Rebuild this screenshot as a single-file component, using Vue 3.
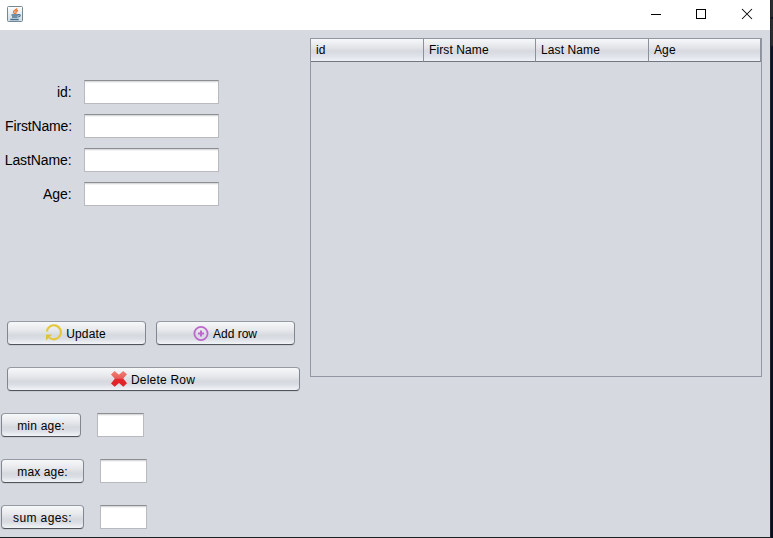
<script setup>
const fields = [
  { label: 'id:', tone: 'regular' },
  { label: 'FirstName:', tone: 'long' },
  { label: 'LastName:', tone: 'regular' },
  { label: 'Age:', tone: 'regular' },
]
const columns = ['id', 'First Name', 'Last Name', 'Age']
const stats = [
  { label: 'min age:', size: 'small' },
  { label: 'max age:', size: 'medium' },
  { label: 'sum ages:', size: 'medium wide' },
]
</script>

<template>
  <div class="desktop">
    <div class="window">
      <header class="titlebar">
        <svg class="app-icon" width="16" height="16" viewBox="0 0 16 16">
          <defs>
            <linearGradient id="tile" x1="0" y1="0" x2="0" y2="1">
              <stop offset="0" stop-color="#fdfdfe" />
              <stop offset="1" stop-color="#ccdbe4" />
            </linearGradient>
          </defs>
          <rect x=".5" y=".5" width="15" height="15" rx="1" fill="url(#tile)" stroke="#768894" />
          <path d="M10 2.500C9.500 4 6.500 4.500 6.500 6C6.500 7 7.500 7.300 7.700 8M11 4.500C9 5.200 8.500 5.700 9 6.600C9.200 7 8.900 7.500 8.600 8" fill="none" stroke="#ea7a30" stroke-width="1.400" />
          <path d="M4.500 9H11.500M5 11H10.500M3.300 13.500H11.700" fill="none" stroke="#47718e" stroke-width="1.300" />
          <path d="M11 8.600C14.200 7.900 13.800 10.900 10.800 11" fill="none" stroke="#47718e" stroke-width="1.200" />
        </svg>
        <div class="controls">
          <svg width="12" height="12" viewBox="0 0 12 12" shape-rendering="crispEdges"><path d="M1 6.500H11" /></svg>
          <svg width="12" height="12" viewBox="0 0 12 12" shape-rendering="crispEdges"><rect x="1.500" y="1.500" width="9" height="9" /></svg>
          <svg class="close" width="12" height="12" viewBox="0 0 12 12"><path d="M1 1L11 11M11 1L1 11" /></svg>
        </div>
      </header>
      <main class="content">
        <section class="side">
          <div class="form">
            <label v-for="f in fields" :key="f.label" class="form-row">
              <span class="caption" :class="f.tone">{{ f.label }}</span>
              <input class="field" type="text" />
            </label>
          </div>
          <div class="actions">
            <button class="btn update">
              <svg width="18" height="18" viewBox="0 0 18 18">
                <path d="M1.900 7.500A7 7 0 1 1 4.200 13.500" fill="none" stroke="#e3c83a" stroke-width="2.200" />
                <path d="M1 10.600H7L4.800 13L4 13.500L1 16.500Z" fill="#dfc33c" />
              </svg>
              Update
            </button>
            <button class="btn add">
              <svg width="16" height="16" viewBox="0 0 16 16">
                <circle cx="8" cy="7.500" r="6.600" fill="none" stroke="#bd67cc" stroke-width="1.800" />
                <path d="M5 7.500H11M8 4.500V10.500" stroke="#bd67cc" stroke-width="2" />
              </svg>
              Add row
            </button>
          </div>
          <button class="btn delete">
            <svg width="16" height="16" viewBox="0 0 16 16">
              <defs>
                <linearGradient id="cross" x1="0" y1="0" x2="0" y2="1">
                  <stop offset="0" stop-color="#ee8277" />
                  <stop offset=".45" stop-color="#e75f59" />
                  <stop offset=".55" stop-color="#e52529" />
                  <stop offset="1" stop-color="#d9242b" />
                </linearGradient>
              </defs>
              <path d="M3.500 0L8 3.800L12.200 0L16 3.300L12.200 7.500L16 12.300L12.300 15.700L8 12L3.700 15.700L0 12.500L3.800 7.800L0 3.600Z" fill="url(#cross)" />
            </svg>
            Delete Row
          </button>
          <div class="stats">
            <div v-for="s in stats" :key="s.label" class="stat">
              <button class="btn" :class="s.size">{{ s.label }}</button>
              <input class="field result" type="text" readonly />
            </div>
          </div>
        </section>
        <section class="table">
          <div class="thead">
            <div v-for="c in columns" :key="c" class="th">{{ c }}</div>
          </div>
        </section>
      </main>
    </div>
    <div class="backdrop"></div>
  </div>
</template>

<style>
body {
  margin: 0;
  overflow: hidden;
}
</style>

<style scoped>
.desktop {
  display: flex;
  width: 773px;
  height: 538px;
  font-family: "Liberation Sans", Arial, sans-serif;
  font-size: 12px;
  color: #000;
}
.window {
  box-sizing: border-box;
  width: 770px;
  height: 538px;
  background: #d6d9e0;
  border-bottom: 1px solid #1b2025;
}
.backdrop {
  width: 3px;
  background: linear-gradient(90deg, #202329 1px, transparent 1px), linear-gradient(#2b2d2e 17px, #0a1424 17px, #0a1424 19px, #2b2d2e 19px, #2b2d2e 45px, #0a1429 47px, #080e1b);
}
.titlebar {
  display: flex;
  justify-content: space-between;
  box-sizing: border-box;
  height: 30px;
  padding: 6px 17px 0 7px;
  background: #fff;
}
.controls {
  display: flex;
  gap: 33px;
  padding-top: 2px;
}
.controls svg {
  fill: none;
  stroke: #000;
  stroke-width: 1;
}
.controls .close {
  margin-left: 1px;
  stroke-width: 1.050;
}
.content {
  display: flex;
}
.side {
  width: 310px;
}
.form {
  display: flex;
  flex-direction: column;
  gap: 10px;
  padding-top: 50px;
}
.form-row {
  display: flex;
  align-items: center;
  gap: 12px;
  height: 24px;
}
.caption {
  box-sizing: border-box;
  width: 72px;
  padding-right: .5px;
  text-align: right;
  font-size: 14px;
  line-height: 24px;
  letter-spacing: -.1px;
  white-space: nowrap;
}
.caption.long {
  padding-right: 0;
  letter-spacing: -.15px;
}
.field {
  box-sizing: border-box;
  width: 135px;
  height: 24px;
  margin: 0;
  padding: 0 4px;
  border: 1px solid #b8babf;
  border-top-color: #8d8e91;
  border-radius: 0;
  outline: none;
  background: linear-gradient(#d9dadc 1px, #f3f3f4 1px, #f3f3f4 2px, #fff 2px);
  font: inherit;
}
.field.result {
  width: 47px;
}
.actions {
  display: flex;
  gap: 10px;
  padding: 115px 0 22px 7px;
}
.btn {
  display: flex;
  align-items: center;
  justify-content: center;
  gap: 4px;
  box-sizing: border-box;
  height: 24px;
  margin: 0;
  padding: 1px 0 0;
  border: 1px solid #82868e;
  border-top-color: #969aa2;
  border-bottom-color: #50545b;
  border-radius: 4px;
  background: linear-gradient(#f7f8fa, #e7e9ec 35%, #d6d9df 60%, #dadde3 75%, #f2f4f8);
  box-shadow: 0 1px 0 #c8cbd2;
  color: #000;
  font: inherit;
  letter-spacing: .12px;
  white-space: nowrap;
}
.update,
.add {
  width: 139px;
}
.update {
  gap: 3px;
  padding-right: 2px;
}
.update svg,
.delete svg {
  margin-bottom: 1px;
}
.add {
  letter-spacing: 0;
  padding-right: 1px;
}
.delete {
  width: 293px;
  margin-left: 7px;
  padding-right: 1px;
  letter-spacing: .2px;
}
.small {
  width: 80px;
  letter-spacing: .2px;
}
.medium {
  width: 83px;
}
.wide {
  letter-spacing: .4px;
}
.stats {
  display: flex;
  flex-direction: column;
  gap: 22px;
  padding: 22px 0 0 1px;
}
.stat {
  display: flex;
  gap: 16px;
}
.table {
  box-sizing: border-box;
  width: 452px;
  height: 339px;
  margin-top: 8px;
  border: 1px solid #9297a1;
}
.thead {
  display: grid;
  grid-template-columns: 113px 112px 113px 112px;
  height: 22px;
}
.th {
  box-sizing: border-box;
  padding-left: 5px;
  border-right: 1px solid #8d9199;
  border-bottom: 1px solid #72767f;
  background: linear-gradient(#f7f8fa, #e2e4e8 40%, #d6d9df 55%, #dee1e7 75%, #eef1f7);
  letter-spacing: .1px;
  line-height: 22px;
}
</style>
